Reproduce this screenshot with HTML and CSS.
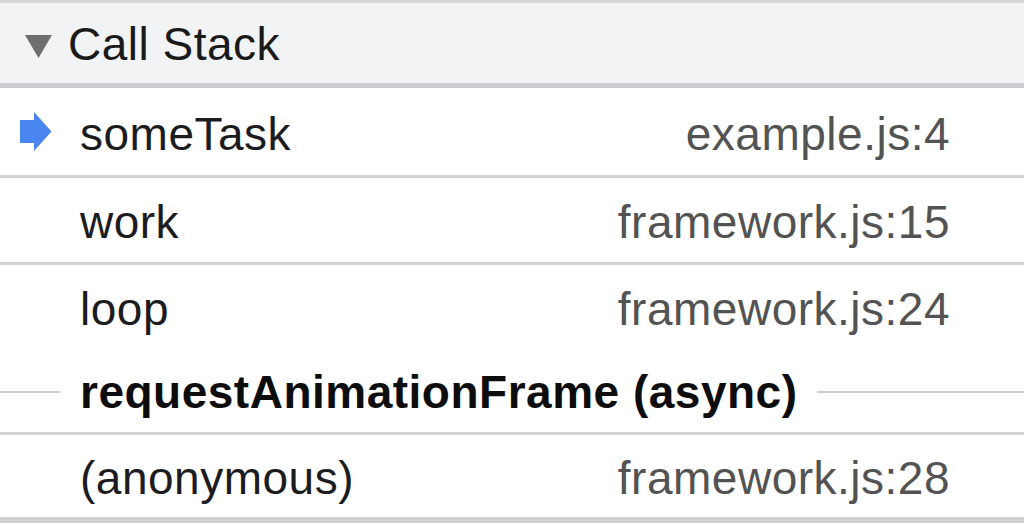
FILE: index.html
```html
<!DOCTYPE html>
<html>
<head>
<meta charset="utf-8">
<link rel="stylesheet" href="styles.css">
</head>
<body>
<div class="panel">
  <div class="header">
    <svg class="caret" width="27" height="23" viewBox="0 0 27 23"><polygon points="0,0 27,0 13.5,23" fill="#6e6e6e"/></svg>
    <span class="title">Call Stack</span>
  </div>
  <div class="frame first">
    <span class="icon"><svg width="32" height="39" viewBox="0 0 32 39"><polygon points="0,8 14,8 14,0 31.5,19.5 14,39 14,31 0,31" fill="#4a86f0"/></svg></span>
    <span class="name">someTask</span>
    <span class="loc">example.js:4</span>
  </div>
  <div class="frame">
    <span class="icon"></span>
    <span class="name">work</span>
    <span class="loc">framework.js:15</span>
  </div>
  <div class="frame noline">
    <span class="icon"></span>
    <span class="name">loop</span>
    <span class="loc">framework.js:24</span>
  </div>
  <div class="async">
    <span class="async-label">requestAnimationFrame (async)</span>
  </div>
  <div class="frame lastrow">
    <span class="icon"></span>
    <span class="name">(anonymous)</span>
    <span class="loc">framework.js:28</span>
  </div>
</div>
</body>
</html>
```
FILE: styles.css
```css
html, body {
  margin: 0;
  padding: 0;
  background: #ffffff;
}
body {
  width: 1024px;
  height: 524px;
  overflow: hidden;
  font-family: "Liberation Sans", Arial, Helvetica, sans-serif;
  font-size: 46px;
  letter-spacing: 0.5px;
}
.panel {
  border-top: 3px solid #d4d5d7;
}
.header {
  height: 78px;
  padding-top: 2px;
  background: #f1f3f4;
  border-bottom: 5px solid #cacccf;
  display: flex;
  align-items: center;
  padding-left: 25px;
  gap: 16px;
  color: #1a1a1a;
}
.caret {
  margin-top: 4px;
  flex: none;
}
.title {
  line-height: 1;
}
.frame {
  height: 80px;
  padding-top: 4px;
  border-bottom: 3px solid #d3d3d3;
  display: flex;
  align-items: center;
  padding-left: 20px;
  padding-right: 74px;
}
.frame.first {
  height: 83px;
}
.frame.noline {
  border-bottom: none;
}
.frame.lastrow {
  height: 78px;
  border-bottom: 6px solid #d0d1d3;
}
.icon {
  width: 40px;
  margin-right: 20px;
  margin-top: -4px;
  flex: none;
  display: flex;
  align-items: center;
}
.name {
  color: #1c1c1e;
  flex: 1;
}
.loc {
  color: #535353;
}
.async {
  height: 81px;
  padding-top: 2px;
  border-bottom: 3px solid #d3d3d3;
  display: flex;
  align-items: center;
  gap: 20px;
}
.async::before,
.async::after {
  content: "";
  height: 2px;
  background: #cfcfcf;
}
.async::before {
  width: 60px;
  flex: none;
}
.async::after {
  flex: 1;
}
.async-label {
  font-weight: bold;
  color: #0d0d0d;
}
```
